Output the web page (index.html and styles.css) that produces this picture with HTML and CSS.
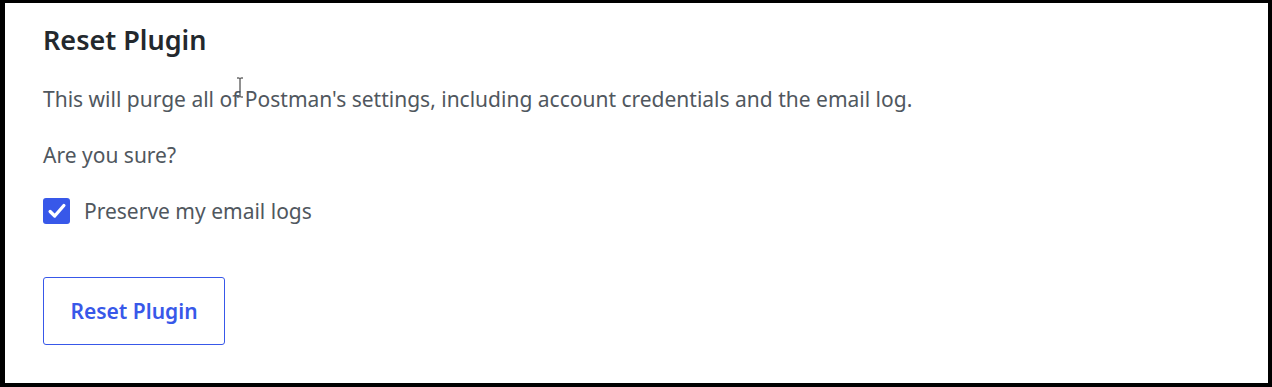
FILE: index.html
```html
<!DOCTYPE html>
<html lang="en">
<head>
    <meta charset="UTF-8">
    <title>Reset Plugin</title>
    <link rel="stylesheet" href="styles.css">
</head>
<body>
    <div class="panel">
        <h2>Reset Plugin</h2>
        <p>This will purge all of Postman's settings, including account credentials and the email log.</p>
        <p>Are you sure?</p>

        <label class="check-row">
            <span class="checkbox">
                <svg viewBox="0 0 24 24" width="22" height="22">
                    <path d="M4.5 12.5l5 5L19.5 6" fill="none" stroke="#fff" stroke-width="3.6" stroke-linecap="round" stroke-linejoin="round"/>
                </svg>
            </span>
            Preserve my email logs
        </label>

        <button class="reset-btn">Reset Plugin</button>

        <!-- mouse text cursor -->
        <svg class="cursor" viewBox="0 0 8 21" width="8" height="21">
            <path d="M1 1h2.5l0.5 0.5 0.5-0.5H7M4 1.5v18M1 20h2.5l0.5-0.5 0.5 0.5H7" fill="none" stroke="#222" stroke-width="1"/>
        </svg>
    </div>
</body>
</html>
```

FILE: styles.css
```css
html, body {
    margin: 0;
    padding: 0;
    background-color: #000;
}

body {
    font-family: "Noto Sans", "Open Sans", sans-serif;
    color: #50575e;
}

.panel {
    position: relative;
    box-sizing: border-box;
    height: 380px;
    margin: 3px 4px 4px 5px;
    background-color: #fff;
    padding: 19px 38px;
}

h2 {
    margin: 0 0 26px;
    font-size: 27px;
    font-weight: 600;
    color: #23282d;
    line-height: 36px;
}

p {
    margin: 0 0 26px;
    font-size: 21px;
    line-height: 30px;
}

.check-row {
    display: flex;
    align-items: center;
    gap: 14px;
    font-size: 21px;
    line-height: 30px;
}

.checkbox {
    width: 27px;
    height: 26px;
    border-radius: 3px;
    background-color: #3858e9;
    display: flex;
    align-items: center;
    justify-content: center;
}

.reset-btn {
    margin-top: 51px;
    width: 182px;
    height: 68px;
    background: #fff;
    border: 1px solid #3858e9;
    border-radius: 3px;
    color: #3858e9;
    font-family: inherit;
    font-size: 21px;
    font-weight: 600;
    cursor: pointer;
}

.cursor {
    position: absolute;
    left: 231px;
    top: 74px;
}
```
